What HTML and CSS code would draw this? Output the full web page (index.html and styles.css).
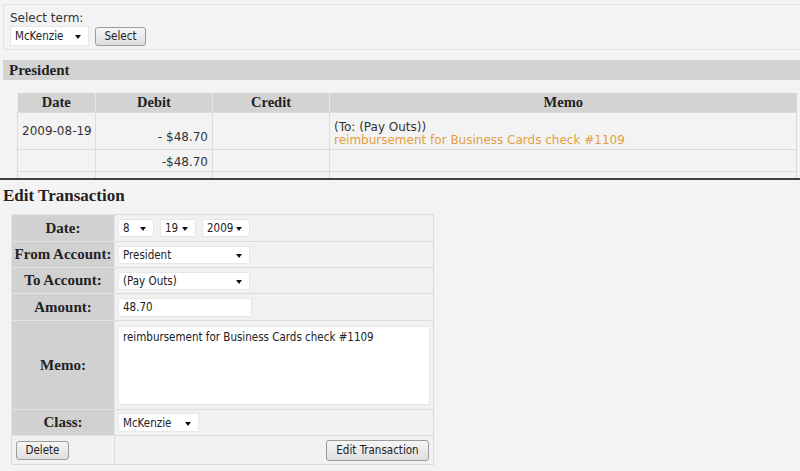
FILE: index.html
```html
<!DOCTYPE html>
<html>
<head>
<meta charset="utf-8">
<title>Edit Transaction</title>
<link rel="stylesheet" href="styles.css">
</head>
<body>
<div class="top">
  <div class="termbox">
    <div class="term-label">Select term:</div>
    <div class="term-row">
      <span class="sel w-term"><select><option>McKenzie</option></select></span>
      <button class="btn btn-select">Select</button>
    </div>
  </div>
  <div class="section">
    <h2 class="section-title">President</h2>
    <table class="ledger">
      <colgroup>
        <col class="c-date"><col class="c-debit"><col class="c-credit"><col>
      </colgroup>
      <thead>
        <tr><th>Date</th><th>Debit</th><th>Credit</th><th>Memo</th></tr>
      </thead>
      <tbody>
        <tr class="r1">
          <td class="date">2009-08-19</td>
          <td class="num bottom">- $48.70</td>
          <td></td>
          <td class="memo">(To: (Pay Outs))<br><span class="memo-link">reimbursement for Business Cards check #1109</span></td>
        </tr>
        <tr class="r2">
          <td></td>
          <td class="num">-$48.70</td>
          <td></td>
          <td></td>
        </tr>
        <tr class="r3">
          <td>&nbsp;</td><td></td><td></td><td></td>
        </tr>
      </tbody>
    </table>
  </div>
</div>
<div class="edit">
  <h2 class="edit-title">Edit Transaction</h2>
  <table class="form">
    <tr class="f-date">
      <th>Date:</th>
      <td>
        <div class="date-row">
          <span class="sel w-m"><select><option>8</option></select></span>
          <span class="sel w-d"><select><option>19</option></select></span>
          <span class="sel w-y"><select><option>2009</option></select></span>
        </div>
      </td>
    </tr>
    <tr class="f-row">
      <th>From Account:</th>
      <td><span class="sel w-acct"><select><option>President</option></select></span></td>
    </tr>
    <tr class="f-row">
      <th>To Account:</th>
      <td><span class="sel w-acct"><select><option>(Pay Outs)</option></select></span></td>
    </tr>
    <tr class="f-amount">
      <th>Amount:</th>
      <td><input class="txt" type="text" value="48.70"></td>
    </tr>
    <tr class="f-memo">
      <th>Memo:</th>
      <td><textarea class="area">reimbursement for Business Cards check #1109</textarea></td>
    </tr>
    <tr class="f-row">
      <th>Class:</th>
      <td><span class="sel w-class"><select><option>McKenzie</option></select></span></td>
    </tr>
    <tr class="f-actions">
      <td class="act-left"><button class="btn btn-delete">Delete</button></td>
      <td class="act-right"><button class="btn btn-edit">Edit Transaction</button></td>
    </tr>
  </table>
</div>
</body>
</html>
```
FILE: styles.css
```css
html, body {
  margin: 0;
  padding: 0;
  background: #f3f3f3;
}
body {
  font-family: "DejaVu Sans", Verdana, sans-serif;
  font-size: 12px;
  color: #333;
}

/* ---------- top page (clipped by the overlay line) ---------- */
.top {
  height: 178px;
  overflow: hidden;
  border-bottom: 2px solid #3f3f3f;
  padding-left: 3px;
}
.termbox {
  margin-top: 4px;
  border: 1px solid #e2e2e2;
  border-right: none;
  padding: 6px 6px 3px 6px;
}
.term-label {
  line-height: 15px;
  color: #333;
}
.term-row {
  display: flex;
  align-items: center;
  gap: 6px;
}

/* select look-alike */
.sel {
  position: relative;
  display: inline-block;
}
.sel select {
  -webkit-appearance: none;
  appearance: none;
  width: 100%;
  margin: 0;
  background: #fff;
  border: 1px solid #e6e6e6;
  border-radius: 0;
  padding: 0 0 0 4px;
  font-family: "DejaVu Sans Condensed", "Liberation Sans", sans-serif;
  font-stretch: condensed;
  font-size: 11.5px;
  color: #222;
  box-sizing: border-box;
  outline: none;
}
.sel::after {
  content: "";
  position: absolute;
  right: 8px;
  top: 50%;
  margin-top: -1px;
  border-left: 3px solid transparent;
  border-right: 3px solid transparent;
  border-top: 4px solid #111;
  pointer-events: none;
}
.w-term { width: 79px; }
.w-term select { height: 20px; }

.btn {
  font-family: "DejaVu Sans Condensed", "Liberation Sans", sans-serif;
  font-stretch: condensed;
  font-size: 11.5px;
  color: #222;
  background: linear-gradient(#f6f6f6, #dedede);
  border: 1px solid #9c9c9c;
  border-radius: 3px;
  padding: 0 4px;
  margin: 0;
  box-sizing: border-box;
}
.btn-select { width: 51px; height: 19px; }

.section { margin-top: 10px; }
.section-title {
  margin: 0;
  height: 20px;
  line-height: 20px;
  background: #d3d3d3;
  padding-left: 6px;
  font-family: "Liberation Serif", "Times New Roman", serif;
  font-size: 15px;
  font-weight: bold;
  color: #222;
}
.ledger {
  margin: 13px 0 0 14px;
  width: 780px;
  border-collapse: collapse;
  table-layout: fixed;
}
.c-date { width: 78px; }
.c-debit { width: 117px; }
.c-credit { width: 117px; }
.ledger th {
  background: #d3d3d3;
  height: 19px;
  padding: 0;
  font-family: "Liberation Serif", "Times New Roman", serif;
  font-size: 14.5px;
  font-weight: bold;
  color: #222;
  border-right: 1px solid #e6e6e6;
  line-height: 19px;
}
.ledger th:last-child { border-right: none; }
.ledger td {
  border: 1px solid #dcdcdc;
  padding: 0 4px;
  vertical-align: middle;
  line-height: 13px;
  white-space: nowrap;
}
.ledger td.date { padding: 0 2px 0 4px; }
.ledger tr.r1 td { height: 31px; padding-bottom: 5px; }
.ledger tr.r2 td { height: 18px; padding-top: 3px; }
.ledger tr.r3 td { height: 21px; }
.ledger td.num { text-align: right; }
.ledger td.bottom { vertical-align: bottom; }
.ledger tr.r1 td.date { padding-bottom: 0; height: 36px; }
.ledger tr.r1 td.memo { padding-top: 5px; padding-bottom: 0; }
.memo-link { color: #e3a03f; }

/* ---------- edit overlay ---------- */
.edit {
  padding: 5px 0 0 3px;
}
.edit-title {
  margin: 0 0 8px 0;
  line-height: 21px;
  font-family: "Liberation Serif", "Times New Roman", serif;
  font-size: 17px;
  font-weight: bold;
  color: #222;
}
.form {
  margin-left: 8px;
  width: 423px;
  border-collapse: collapse;
  table-layout: fixed;
}
.form th {
  width: 103px;
  box-sizing: border-box;
  background: #d1d1d1;
  border: 1px solid #e4e4e4;
  padding: 0;
  text-align: center;
  font-family: "Liberation Serif", "Times New Roman", serif;
  font-size: 15px;
  font-weight: bold;
  color: #222;
  white-space: nowrap;
}
.form td {
  border: 1px solid #dcdcdc;
  background: #f1f1f1;
  padding: 0 3px;
  vertical-align: middle;
}
.form tr.f-date td, .form tr.f-date th { height: 26px; }
.form tr.f-row td, .form tr.f-row th { height: 25px; }
.form tr.f-amount td, .form tr.f-amount th { height: 26px; }
.form tr.f-memo td, .form tr.f-memo th { height: 88px; }
.form tr.f-actions td { height: 28px; }

.date-row { display: flex; gap: 6px; }
.w-m, .w-d { width: 36px; }
.w-y { width: 48px; }
.w-m select, .w-d select, .w-y select { height: 18px; }
.w-acct { width: 132px; }
.w-acct select { height: 18px; }
.w-class { width: 81px; }
.w-class select { height: 19px; }

.txt {
  width: 134px;
  height: 19px;
  box-sizing: border-box;
  border: 1px solid #e6e6e6;
  background: #fff;
  padding: 0 4px;
  margin: 0;
  font-family: "DejaVu Sans Condensed", "Liberation Sans", sans-serif;
  font-stretch: condensed;
  font-size: 11.5px;
  color: #222;
  outline: none;
}
.area {
  display: block;
  width: 312px;
  height: 79px;
  box-sizing: border-box;
  border: 1px solid #e6e6e6;
  background: #fff;
  padding: 3px 4px;
  margin: 0;
  resize: none;
  font-family: "DejaVu Sans Condensed", "Liberation Sans", sans-serif;
  font-stretch: condensed;
  font-size: 11.5px;
  color: #222;
  outline: none;
}
.form td.act-left {
  background: #f1f1f1;
  padding: 0 4px;
}
.form td.act-right {
  text-align: right;
  padding: 0 4px;
}
.btn-delete { width: 53px; height: 19px; }
.btn-edit { width: 103px; height: 21px; }
```
